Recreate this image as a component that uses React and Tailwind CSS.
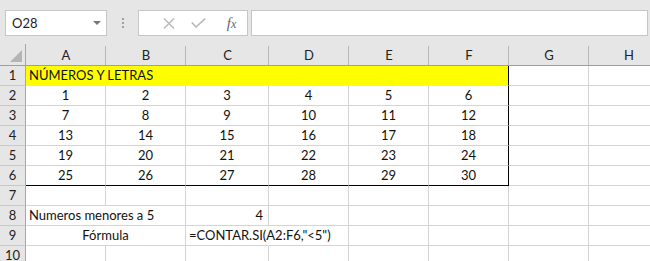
const COLS = [
  { label: "A", w: "w-[80px]" },
  { label: "B", w: "w-[80px]" },
  { label: "C", w: "w-[83px]" },
  { label: "D", w: "w-[80px]" },
  { label: "E", w: "w-[80px]" },
  { label: "F", w: "w-[80px]" },
  { label: "G", w: "w-[80px]" },
  { label: "H", w: "w-[80px]" },
];

const FONT = { fontFamily: "Lato, 'Open Sans', sans-serif" };

const numbers = [
  [1, 2, 3, 4, 5, 6],
  [7, 8, 9, 10, 11, 12],
  [13, 14, 15, 16, 17, 18],
  [19, 20, 21, 22, 23, 24],
  [25, 26, 27, 28, 29, 30],
];

// ─── TOOLBAR ──────────────────────────────────────────────────────────────────
function Toolbar() {
  return (
    <div className="h-[44px] flex items-start pt-[10px] pl-[5px] bg-[#e6e6e6]">
      {/* Name box */}
      <div className="w-[102px] h-[26px] bg-white border border-[#c6c6c6] flex items-center justify-between pl-[6px] pr-[5px]">
        <span className="text-[13px] text-[#222] leading-none" style={FONT}>O28</span>
        <svg width="8" height="5" viewBox="0 0 8 5">
          <path d="M0 0 H8 L4 4 Z" fill="#777" />
        </svg>
      </div>

      {/* Dots */}
      <div className="w-[31px] h-[26px] flex flex-col items-center justify-center gap-[2px]">
        <span className="block w-[2px] h-[2px] bg-[#a0a0a0]" />
        <span className="block w-[2px] h-[2px] bg-[#a0a0a0]" />
        <span className="block w-[2px] h-[2px] bg-[#a0a0a0]" />
      </div>

      {/* Formula buttons */}
      <div className="w-[110px] h-[26px] bg-white border border-[#c6c6c6] flex items-center">
        <div className="w-[36px] flex justify-end">
          <svg width="12" height="11" viewBox="0 0 12 11">
            <path d="M1 0.5 L11 10.5 M11 0.5 L1 10.5" stroke="#b8b8b8" strokeWidth="1.4" fill="none" />
          </svg>
        </div>
        <div className="w-[35px] flex justify-center pl-[12px]">
          <svg width="15" height="10" viewBox="0 0 15 10">
            <path d="M0.8 4.5 L5 9 L14.2 0.6" stroke="#b8b8b8" strokeWidth="1.6" fill="none" />
          </svg>
        </div>
        <div className="flex-1 flex justify-center pl-[6px]">
          <span
            className="italic text-[15px] text-[#666] leading-none"
            style={{ fontFamily: "'Liberation Serif', serif" }}
          >
            f<span className="text-[12px]">x</span>
          </span>
        </div>
      </div>

      {/* Formula input */}
      <div className="ml-[3px] flex-1 mr-[2px] h-[26px] bg-white border border-[#c6c6c6]" />
    </div>
  );
}

// ─── HEADER ROW ───────────────────────────────────────────────────────────────
function HeaderRow() {
  return (
    <div className="flex h-[22px] bg-[#e6e6e6] border-b border-[#9e9e9e]">
      <div className="w-[26px] shrink-0 border-r border-[#a6a6a6] relative">
        <svg className="absolute right-[3px] bottom-[3px]" width="12" height="12" viewBox="0 0 12 12">
          <path d="M12 0 V12 H0 Z" fill="#b4b4b4" />
        </svg>
      </div>
      {COLS.map((c) => (
        <div
          key={c.label}
          className={`${c.w} shrink-0 flex items-end justify-center pb-[3px] text-[13px] leading-none text-[#222] relative`}
          style={FONT}
        >
          {c.label}
          <span className="absolute right-0 top-[2px] bottom-0 w-px bg-[#b8b8b8]" />
        </div>
      ))}
    </div>
  );
}

// ─── CELL ─────────────────────────────────────────────────────────────────────
function Cell({ w, children, align = "center", noRight, yellow, boxRight, boxBottom, overflow }) {
  const alignCls =
    align === "left" ? "justify-start pl-[3px]" : align === "right" ? "justify-end pr-[5px]" : "justify-center";
  const rightCls = boxRight
    ? "border-r border-r-black"
    : noRight
    ? yellow
      ? "border-r border-r-[#ffff00]"
      : "border-r border-r-white"
    : "border-r border-r-[#d4d4d4]";
  const bottomCls = boxBottom
    ? "border-b border-b-black"
    : yellow
    ? "border-b border-b-[#ffff00]"
    : "border-b border-b-[#d4d4d4]";
  return (
    <div
      className={`${w} shrink-0 h-[20px] flex items-center ${alignCls} ${rightCls} ${bottomCls} ${
        yellow ? "bg-[#ffff00]" : "bg-white"
      } text-[13px] leading-[19px] text-[#111] whitespace-nowrap ${overflow ? "overflow-visible relative z-10" : "overflow-hidden"}`}
      style={FONT}
    >
      {children}
    </div>
  );
}

function RowHead({ n }) {
  return (
    <div
      className="w-[26px] shrink-0 h-[20px] bg-[#e6e6e6] border-r border-r-[#a6a6a6] border-b border-b-[#c8c8c8] flex items-center justify-center text-[13px] leading-[19px] text-[#222]"
      style={FONT}
    >
      {n}
    </div>
  );
}

function EmptyRest({ from }) {
  return COLS.slice(from).map((c) => <Cell key={c.label} w={c.w} />);
}

// ─── APP ──────────────────────────────────────────────────────────────────────
export default function App() {
  return (
    <div className="w-[650px] h-[261px] overflow-hidden bg-white">
      <Toolbar />
      <div className="w-[720px]">
        <HeaderRow />

        {/* Row 1 */}
        <div className="flex">
          <RowHead n={1} />
          <Cell w="w-[80px]" yellow noRight align="left" overflow>
            NÚMEROS Y LETRAS
          </Cell>
          <Cell w="w-[80px]" yellow noRight />
          <Cell w="w-[83px]" yellow noRight />
          <Cell w="w-[80px]" yellow noRight />
          <Cell w="w-[80px]" yellow noRight />
          <Cell w="w-[80px]" yellow boxRight />
          <EmptyRest from={6} />
        </div>

        {/* Rows 2-6 */}
        {numbers.map((row, ri) => (
          <div className="flex" key={ri}>
            <RowHead n={ri + 2} />
            {row.map((v, ci) => (
              <Cell key={ci} w={COLS[ci].w} boxRight={ci === 5} boxBottom={ri === 4}>
                {v}
              </Cell>
            ))}
            <EmptyRest from={6} />
          </div>
        ))}

        {/* Row 7 */}
        <div className="flex">
          <RowHead n={7} />
          <EmptyRest from={0} />
        </div>

        {/* Row 8 */}
        <div className="flex">
          <RowHead n={8} />
          <Cell w="w-[80px]" align="left" noRight overflow>
            Numeros menores a 5
          </Cell>
          <Cell w="w-[80px]" />
          <Cell w="w-[83px]" align="right">
            4
          </Cell>
          <EmptyRest from={3} />
        </div>

        {/* Row 9 */}
        <div className="flex">
          <RowHead n={9} />
          <Cell w="w-[160px]">Fórmula</Cell>
          <Cell w="w-[83px]" align="left" noRight overflow>
            =CONTAR.SI(A2:F6,"&lt;5")
          </Cell>
          <EmptyRest from={3} />
        </div>

        {/* Row 10 */}
        <div className="flex">
          <RowHead n={10} />
          <EmptyRest from={0} />
        </div>
      </div>
    </div>
  );
}
